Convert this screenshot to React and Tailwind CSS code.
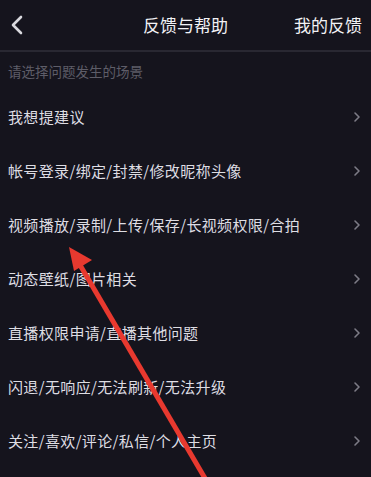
import React from "react";

const items = [
  "我想提建议",
  "帐号登录/绑定/封禁/修改昵称头像",
  "视频播放/录制/上传/保存/长视频权限/合拍",
  "动态壁纸/图片相关",
  "直播权限申请/直播其他问题",
  "闪退/无响应/无法刷新/无法升级",
  "关注/喜欢/评论/私信/个人主页",
];

function Chevron() {
  return (
    <svg width="8" height="12" viewBox="0 0 8 12" className="shrink-0">
      <path d="M2 2l4 4-4 4" fill="none" stroke="#7d7c86" strokeWidth="1.6" strokeLinecap="round" strokeLinejoin="round" />
    </svg>
  );
}

export default function App() {
  return (
    <div
      className="relative h-[477px] w-[371px] overflow-hidden bg-[#15141d]"
      style={{ fontFamily: '"Noto Sans CJK SC", "Noto Sans", sans-serif' }}
    >
      <div className="flex h-[52px] items-center border-b-2 border-[#292832] pl-[10px] pr-[9px]">
        <svg width="14" height="20" viewBox="0 0 14 20" className="shrink-0">
          <path d="M11 2L3 10l8 8" fill="none" stroke="#d9d9de" strokeWidth="2.6" strokeLinecap="round" strokeLinejoin="round" />
        </svg>
        <div className="flex-1 pl-[119px] text-[17px] text-[#f2f2f5]">反馈与帮助</div>
        <div className="text-[17px] text-[#f2f2f5]">我的反馈</div>
      </div>

      <div className="flex h-[38px] items-center px-2 text-[13.5px] text-[#5e5d68]">请选择问题发生的场景</div>

      {items.map((t) => (
        <div key={t} className="flex h-[54px] items-center justify-between pl-2 pr-[10px]">
          <span className="text-[15px] tracking-[0.35px] text-[#dedde3]">{t}</span>
          <Chevron />
        </div>
      ))}

      <svg className="pointer-events-none absolute left-0 top-0" width="371" height="477" viewBox="0 0 371 477">
        <line x1="206" y1="480" x2="80" y2="265" stroke="#e8392f" strokeWidth="5" />
        <polygon points="69,247 92,260 74,271" fill="#e8392f" />
      </svg>
    </div>
  );
}
